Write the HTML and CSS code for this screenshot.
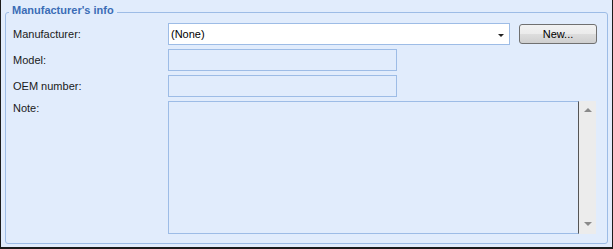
FILE: index.html
```html
<!DOCTYPE html>
<html>
<head>
<meta charset="utf-8">
<link rel="stylesheet" href="styles.css">
</head>
<body>
<div class="frame">
  <div class="group">
    <div class="legend">Manufacturer's info</div>
    <div class="form">
      <div class="label">Manufacturer:</div>
      <div class="field-row">
        <div class="combo">
          <span class="combo-text">(None)</span>
          <span class="combo-arrow"></span>
        </div>
        <button class="btn">New...</button>
      </div>
      <div class="label">Model:</div>
      <div class="field-row"><div class="input"></div></div>
      <div class="label">OEM number:</div>
      <div class="field-row"><div class="input"></div></div>
      <div class="label label-top">Note:</div>
      <div class="note-row">
        <div class="memo"></div>
        <div class="vscroll">
          <span class="arr-up"></span>
          <span class="arr-down"></span>
        </div>
      </div>
    </div>
  </div>
</div>
</body>
</html>
```
FILE: styles.css
```css
html, body {
  margin: 0;
  padding: 0;
  background: #e1ecfc;
}
.frame {
  width: 613px;
  height: 249px;
  box-sizing: border-box;
  border-left: 1px solid #1c1c1c;
  border-right: 1px solid #1c1c1c;
  border-bottom: 2px solid #1c1c1c;
  background: #e1ecfc;
  padding-top: 12px;
  padding-left: 4px;
  font-family: "Liberation Sans", Arial, sans-serif;
  font-size: 11px;
  color: #1a1a1a;
}
.group {
  position: relative;
  box-sizing: border-box;
  width: 603px;
  height: 232px;
  border: 1px solid #9dbce6;
  border-radius: 3px;
  padding: 10px 10px 9px 7px;
}
.legend {
  position: absolute;
  top: -9px;
  left: 3px;
  padding: 0 3px;
  background: #e1ecfc;
  font-weight: bold;
  line-height: 13px;
  color: #3b6cb6;
}
.form {
  display: grid;
  grid-template-columns: 155px 1fr;
  grid-template-rows: 22px 22px 22px 133px;
  row-gap: 4px;
}
.label {
  display: flex;
  align-items: center;
  line-height: 13px;
}
.label-top {
  align-items: flex-start;
  padding-top: 1px;
}
.field-row {
  display: flex;
  align-items: center;
  gap: 9px;
}
.combo {
  box-sizing: border-box;
  width: 342px;
  height: 22px;
  border: 1px solid #9dbce6;
  background: #ffffff;
  display: flex;
  align-items: center;
  justify-content: space-between;
  padding: 0 5px 0 2px;
  color: #000;
}
.combo-arrow {
  width: 0;
  height: 0;
  border-left: 3px solid transparent;
  border-right: 3px solid transparent;
  border-top: 3px solid #222;
  margin-top: 2px;
}
.btn {
  box-sizing: border-box;
  width: 78px;
  height: 20px;
  border: 1px solid #707070;
  border-radius: 3px;
  background: linear-gradient(#f2f2f2 0%, #ebebeb 50%, #dddddd 51%, #cfcfcf 100%);
  font-family: "Liberation Sans", Arial, sans-serif;
  font-size: 11px;
  color: #000;
  padding: 0;
  margin: 0;
}
.input {
  box-sizing: border-box;
  width: 229px;
  height: 22px;
  border: 1px solid #9dbce6;
  background: #e1ecfc;
}
.note-row {
  display: flex;
}
.memo {
  box-sizing: border-box;
  width: 411px;
  height: 133px;
  border: 1px solid #9dbce6;
  border-right: 1px solid #555555;
}
.vscroll {
  width: 17px;
  height: 133px;
  background: #ececec;
  display: flex;
  flex-direction: column;
  justify-content: space-between;
  align-items: center;
  padding: 7px 0 8px;
  box-sizing: border-box;
}
.arr-up {
  width: 0;
  height: 0;
  border-left: 4px solid transparent;
  border-right: 4px solid transparent;
  border-bottom: 4px solid #8a8a8a;
}
.arr-down {
  width: 0;
  height: 0;
  border-left: 4px solid transparent;
  border-right: 4px solid transparent;
  border-top: 4px solid #8a8a8a;
}
```
